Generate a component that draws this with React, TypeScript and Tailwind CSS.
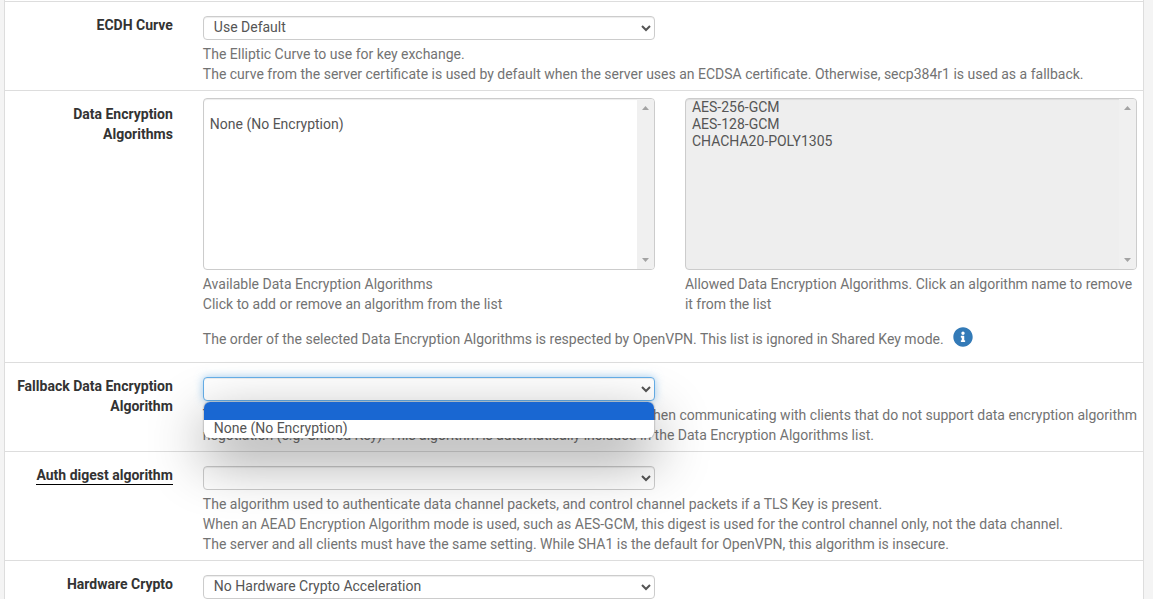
import React, { useState } from 'react';
import { FaInfoCircle } from 'react-icons/fa';

interface FormRowProps {
  label: string;
  htmlFor: string;
  required?: boolean;
  children: React.ReactNode;
}

const FormRow: React.FC<FormRowProps> = ({ label, htmlFor, required, children }) => (
  <div className="-mr-[9px] -ml-[10px] flex pt-[7px] pb-[6px] last:pb-0">
    <div className="w-1/6 px-[15px] pt-[6px] text-right font-bold text-[#333]">
      <label htmlFor={htmlFor}>
        {required ? (
          <span className="inline-block border-b border-black leading-[18px]">{label}</span>
        ) : (
          label
        )}
      </label>
    </div>
    <div className="w-5/6">{children}</div>
  </div>
);

// Lines between the rows span the panel, not the wider form row
const Divider = () => <div className="h-px bg-[#ddd]" />;

const HelpText: React.FC<{ children: React.ReactNode }> = ({ children }) => (
  <p className="mt-1 pr-3 pl-[15px] text-[#737373]">{children}</p>
);

interface SelectFieldProps {
  id: string;
  options: string[];
  open?: boolean;
}

const SelectField: React.FC<SelectFieldProps> = ({ id, options, open }) => {
  const [value, setValue] = useState(options[0]);

  return (
    <div className="relative mt-[7px] w-1/2 px-[15px]">
      <select
        id={id}
        value={value}
        onChange={(e) => setValue(e.target.value)}
        className={`block h-6 w-full rounded border bg-white px-[6px] pb-[2px] text-[#555] outline-none ${
          open
            ? 'border-[#66afe9] shadow-[inset_0_1px_1px_rgba(0,0,0,0.075),0_0_8px_rgba(102,175,233,0.6)]'
            : 'border-[#ccc] shadow-[inset_0_1px_1px_rgba(0,0,0,0.075)]'
        }`}
      >
        {options.map((option) => (
          <option key={option} value={option}>
            {option}
          </option>
        ))}
      </select>
      {open && (
        <ul
          role="listbox"
          className="absolute inset-x-4 top-full z-10 mt-px overflow-hidden rounded-md bg-white text-[#555] shadow-[0_0_2px_rgba(0,0,0,0.5),0_20px_56px_rgba(0,0,0,0.45)]"
        >
          {options.map((option) => (
            <li
              key={option}
              role="option"
              aria-selected={option === value}
              onClick={() => setValue(option)}
              className={`h-[18px] px-[10px] leading-4 ${option === value ? 'bg-[#1967d2]' : ''}`}
            >
              {option}
            </li>
          ))}
        </ul>
      )}
    </div>
  );
};

interface ListFieldProps {
  id: string;
  label: string;
  options: string[];
  muted?: boolean;
  children: React.ReactNode;
}

const ListField: React.FC<ListFieldProps> = ({ id, label, options, muted, children }) => (
  <div className="w-1/2">
    <div className="relative mx-[15px]">
      <select
        id={id}
        multiple
        aria-label={label}
        className={`block h-[172px] w-full overflow-hidden rounded border border-[#ccc] px-1 text-[#555] shadow-[inset_0_1px_1px_rgba(0,0,0,0.075)] outline-none ${
          muted ? 'bg-[#eee]' : 'bg-white'
        }`}
      >
        {options.map((option) => (
          <option key={option} value={option} className="h-[17px] px-[2px] pb-px leading-4">
            {option}
          </option>
        ))}
      </select>
      {/* Scroll track */}
      <div className="pointer-events-none absolute inset-y-px right-px flex w-[17px] flex-col items-center justify-between rounded-r-[3px] bg-[#f0f0f0] py-[7px]">
        <svg width="7" height="4" viewBox="0 0 7 4" fill="#a3a3a3">
          <path d="M0 4 L3.5 0 L7 4 Z" />
        </svg>
        <svg width="7" height="4" viewBox="0 0 7 4" fill="#a3a3a3">
          <path d="M0 0 L3.5 4 L7 0 Z" />
        </svg>
      </div>
    </div>
    <HelpText>{children}</HelpText>
  </div>
);

const App: React.FC = () => {
  return (
    <div className="min-h-screen overflow-hidden bg-[#f4f4f4] pr-[9px] pl-1 font-['Roboto',sans-serif] text-[14px] leading-5">
      <form className="min-h-screen border-x border-[#ddd] bg-white pt-px">
        <Divider />
        <FormRow label="ECDH Curve" htmlFor="ecdh_curve">
          <SelectField id="ecdh_curve" options={['Use Default']} />
          <HelpText>
            The Elliptic Curve to use for key exchange.
            <br />
            The curve from the server certificate is used by default when the server uses an ECDSA
            certificate. Otherwise, secp384r1 is used as a fallback.
          </HelpText>
        </FormRow>

        <Divider />
        <FormRow label="Data Encryption Algorithms" htmlFor="available_ciphers">
          <div className="flex">
            <ListField
              id="available_ciphers"
              label="Available Data Encryption Algorithms"
              options={['', 'None (No Encryption)']}
            >
              Available Data Encryption Algorithms
              <br />
              Click to add or remove an algorithm from the list
            </ListField>
            <ListField
              id="allowed_ciphers"
              label="Allowed Data Encryption Algorithms"
              options={['AES-256-GCM', 'AES-128-GCM', 'CHACHA20-POLY1305']}
              muted
            >
              Allowed Data Encryption Algorithms. Click an algorithm name to remove it from the list
            </ListField>
          </div>
          <div className="flex items-start gap-[9px] px-[15px] pt-[13px] pb-[7px] text-[#737373]">
            <p className="pt-[2px]">
              The order of the selected Data Encryption Algorithms is respected by OpenVPN. This list
              is ignored in Shared Key mode.
            </p>
            <button type="button" aria-label="More information" className="h-5 text-[#337ab7]">
              <FaInfoCircle size={20} />
            </button>
          </div>
        </FormRow>

        <Divider />
        <FormRow label="Fallback Data Encryption Algorithm" htmlFor="fallback_cipher">
          <SelectField id="fallback_cipher" options={['', 'None (No Encryption)']} open />
          <HelpText>
            The Fallback Data Encryption Algorithm used for data channel packets when communicating
            with clients that do not support data encryption algorithm negotiation (e.g. Shared Key).
            This algorithm is automatically included in the Data Encryption Algorithms list.
          </HelpText>
        </FormRow>

        <Divider />
        <FormRow label="Auth digest algorithm" htmlFor="digest" required>
          <SelectField id="digest" options={['']} />
          <HelpText>
            The algorithm used to authenticate data channel packets, and control channel packets if a
            TLS Key is present.
            <br />
            When an AEAD Encryption Algorithm mode is used, such as AES-GCM, this digest is used for
            the control channel only, not the data channel.
            <br />
            The server and all clients must have the same setting. While SHA1 is the default for
            OpenVPN, this algorithm is insecure.
          </HelpText>
        </FormRow>

        <Divider />
        <FormRow label="Hardware Crypto" htmlFor="engine">
          <SelectField id="engine" options={['No Hardware Crypto Acceleration']} />
        </FormRow>
      </form>
    </div>
  );
};

export default App;
